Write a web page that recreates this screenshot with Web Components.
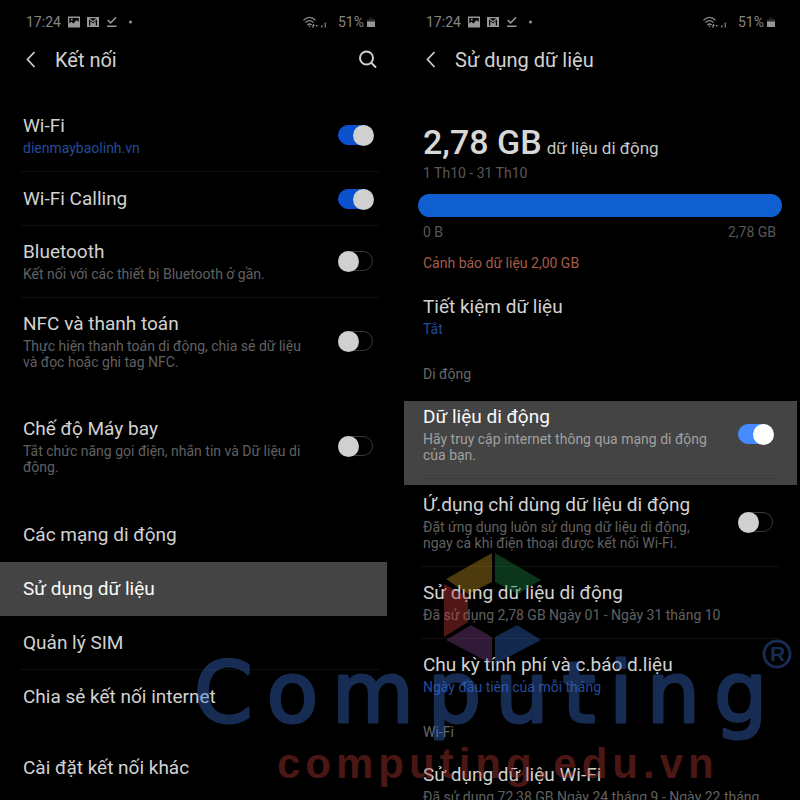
<!DOCTYPE html>
<html lang="vi">
<head>
<meta charset="utf-8">
<meta name="viewport" content="width=device-width, initial-scale=1">
<title>Kết nối</title>
<style>
html { background: #000; }
body { margin: 0; height: 100vh; overflow: hidden; background: #000; color: #d2d2d2; font-family: Roboto, "Noto Sans", sans-serif; }
</style>
</head>
<body>
<settings-stage>
  <phone-screen>
    <status-bar></status-bar>
    <screen-header heading="Kết nối" search></screen-header>
    <settings-group>
      <settings-row heading="Wi-Fi" note="dienmaybaolinh.vn" accent toggle="on" divider></settings-row>
      <settings-row heading="Wi-Fi Calling" toggle="on" divider></settings-row>
      <settings-row heading="Bluetooth" note="Kết nối với các thiết bị Bluetooth ở gần." toggle="off" divider></settings-row>
      <settings-row heading="NFC và thanh toán" note="Thực hiện thanh toán di động, chia sẻ dữ liệu và đọc hoặc ghi tag NFC." toggle="off"></settings-row>
    </settings-group>
    <settings-group>
      <settings-row heading="Chế độ Máy bay" note="Tắt chức năng gọi điện, nhắn tin và Dữ liệu di động." toggle="off"></settings-row>
    </settings-group>
    <settings-group>
      <settings-row heading="Các mạng di động"></settings-row>
      <settings-row heading="Sử dụng dữ liệu" marked="start"></settings-row>
      <settings-row heading="Quản lý SIM" divider></settings-row>
      <settings-row heading="Chia sẻ kết nối internet"></settings-row>
    </settings-group>
    <settings-group>
      <settings-row heading="Cài đặt kết nối khác"></settings-row>
    </settings-group>
  </phone-screen>
  <phone-screen>
    <status-bar></status-bar>
    <screen-header heading="Sử dụng dữ liệu"></screen-header>
    <data-usage amount="2,78 GB" period="1 Th10 - 31 Th10" from="0 B" to="2,78 GB">
      <span slot="kind">dữ liệu di động</span>
      <span slot="warning">Cảnh báo dữ liệu 2,00 GB</span>
    </data-usage>
    <settings-row heading="Tiết kiệm dữ liệu" note="Tắt" accent></settings-row>
    <section-label>Di động</section-label>
    <settings-row heading="Dữ liệu di động" note="Hãy truy cập internet thông qua mạng di động của bạn." toggle="on" marked="full" divider></settings-row>
    <settings-row heading="Ứ.dụng chỉ dùng dữ liệu di động" note="Đặt ứng dụng luôn sử dụng dữ liệu di động, ngay cả khi điện thoại được kết nối Wi-Fi." toggle="off" divider></settings-row>
    <settings-row heading="Sử dụng dữ liệu di động" note="Đã sử dụng 2,78 GB Ngày 01 - Ngày 31 tháng 10" divider></settings-row>
    <settings-row heading="Chu kỳ tính phí và c.báo d.liệu" note="Ngày đầu tiên của mỗi tháng" accent></settings-row>
    <section-label>Wi-Fi</section-label>
    <settings-row heading="Sử dụng dữ liệu Wi-Fi" note="Đã sử dụng 72,38 GB Ngày 24 tháng 9 - Ngày 22 tháng"></settings-row>
  </phone-screen>
  <brand-watermark slot="overlay"></brand-watermark>
</settings-stage>

<script>
const define = (name, render) => customElements.define(name, class extends HTMLElement {
  connectedCallback() {
    if (this.shadowRoot) return;
    this.attachShadow({ mode: 'open' }).innerHTML = render(this);
  }
});
const attr = (el, name) => el.getAttribute(name) || '';

define('settings-stage', () => `
<style>
:host { display: block; position: relative; height: 100%; overflow: hidden; }
.columns { display: grid; grid-template-columns: 1fr 1fr; }
</style>
<div class="columns"><slot></slot></div>
<slot name="overlay"></slot>`);

define('phone-screen', () => `
<style>
:host { display: block; min-width: 0; }
</style>
<slot></slot>`);

define('settings-group', () => `
<style>
:host { display: block; margin-bottom: 17px; }
</style>
<slot></slot>`);

define('status-bar', () => `
<style>
:host { display: flex; justify-content: space-between; align-items: center; height: 20px; padding: 12px 25px 8px 26px; color: #858585; font-size: 14px; line-height: 20px; }
div { display: flex; align-items: center; }
.left { gap: 7px; }
.right { gap: 3px; }
.level { margin-left: 8px; }
svg { display: block; fill: #989898; }
</style>
<div class="left">
  <span>17:24</span>
  <svg width="12" height="12" viewBox="0 0 12 12"><path fill-rule="evenodd" d="M0 .5h12v11H0zM1.300 2v5.600l2.200-1.800 2 1.600 3-3.400 2.200 2V2zM3 2.800h1.600v1.600H3z"/></svg>
  <svg width="12" height="12" viewBox="0 0 12 12"><path fill-rule="evenodd" d="M0 1h12v10H0zM2.600 2.200 6 5l3.400-2.800zM2 3.600v5.900h1.200V5.200L6 7.400l2.800-2.200v4.300H10V3.600L6 6.400z"/></svg>
  <svg width="12" height="12" viewBox="0 0 12 12"><path d="M1 9.600h9.500V11H1zM1.200 4.600l1-1 2.400 2.200L9.600.7l1 1-6 6.300z"/></svg>
  <svg width="12" height="12" viewBox="0 0 12 12"><circle cx="5.500" cy="6" r="1.500"/></svg>
</div>
<div class="right">
  <svg width="15" height="13" viewBox="0 0 15 13"><path d="M.5 4.200Q6.500-1.400 12.500 4.200M2.400 6.600Q6.500 2.800 10.600 6.600M4.300 9Q6.500 7 8.700 9" fill="none" stroke="#8a8a8a" stroke-width="1.200"/><path d="M5.200 9.700h2.600L6.500 11.300zM10.500 7.800 12 10H9zM10 12.300 8.800 10.500h2.400zM13 9h1.500v1.500H13z"/></svg>
  <svg width="6" height="12" viewBox="0 0 6 12"><path d="M0 9h1.500v2.500H0zM3.500 6.500H5v5H3.500z" opacity=".7"/></svg>
  <span class="level">51%</span>
  <svg width="8" height="12" viewBox="0 0 8 12"><path d="M2.500 1.500h3v1h-3z" opacity=".3"/><path d="M0 3h8v3H0z" opacity=".25"/><path d="M0 5.500h8V11H0z"/></svg>
</div>`);

define('screen-header', el => `
<style>
:host { display: flex; align-items: center; height: 40px; padding: 0 22px 20px 24px; }
button { display: block; padding: 0; border: 0; background: none; color: #cfcfcf; }
svg { display: block; fill: none; stroke: currentColor; stroke-width: 2; }
h1 { flex: 1; margin: 0 0 0 17px; font-size: 20px; line-height: 24px; font-weight: 400; }
</style>
<button aria-label="Quay lại"><svg width="14" height="18" viewBox="0 0 14 18"><path d="M10.500 1 3.500 8.500l7 7.500" stroke-width="1.700"/></svg></button>
<h1>${attr(el, 'heading')}</h1>
${el.hasAttribute('search') ? '<button aria-label="Tìm kiếm"><svg width="20" height="20" viewBox="0 0 20 20"><circle cx="8.500" cy="8" r="6.500"/><path d="m13 12.500 5 5"/></svg></button>' : ''}`);

define('toggle-switch', el => `
<style>
:host { display: block; flex: none; }
input { appearance: none; display: flex; align-items: center; box-sizing: border-box; width: 35px; height: 20px; margin: 0; border: 1px solid #3a3a3a; border-radius: 10px; background: transparent; }
input::before { content: ""; width: 21px; height: 21px; margin: 0 -2px 0 -1px; border-radius: 50%; background: var(--knob, #d0d0d0); flex: none; }
input:checked { justify-content: flex-end; border-color: var(--track, #0b50cc); background: var(--track, #0b50cc); }
</style>
<input type="checkbox" role="switch" aria-label="${attr(el, 'name')}" ${el.hasAttribute('on') ? 'checked' : ''}>`);

define('settings-row', el => {
  const toggle = attr(el, 'toggle');
  const text = `<span class="title">${attr(el, 'heading')}</span>${el.hasAttribute('note') ? `<span class="note">${attr(el, 'note')}</span>` : ''}`;
  return `
<style>
:host { display: flex; align-items: center; gap: 24px; position: relative; isolation: isolate; padding: 14px 27px 16px 23px; }
:host(:not([note])) { padding-top: 15px; padding-bottom: 15px; }
:host([divider])::after { content: ""; position: absolute; left: 20px; right: 20px; bottom: 0; height: 1px; background: #0e0e0e; }
:host([marked])::before { content: ""; position: absolute; z-index: -1; background: #444; }
:host([marked="start"])::before { inset: 0 13px 0 0; }
:host([marked="full"])::before { inset: 10px 3px -6px 4px; }
:host([marked="full"])::after { background: #3c3c3c; }
:host([marked]) { color: #fafafa; --note: #a0a0a0; --track: #448bff; --knob: #fff; z-index: 1; }
.text { display: block; flex: 1; min-width: 0; padding: 0; border: 0; background: none; color: inherit; font: inherit; text-align: left; }
.title { display: block; font-size: 19px; line-height: 24px; }
.note { display: block; margin-top: 2px; font-size: 14px; line-height: 16px; color: var(--note, #606060); }
:host([accent]) .note { color: #234c9c; }
</style>
<button class="text">${text}</button>
${toggle ? `<toggle-switch name="${attr(el, 'heading')}" ${toggle === 'on' ? 'on' : ''}></toggle-switch>` : ''}`;
});

define('section-label', () => `
<style>
:host { display: block; padding: 11px 23px 7px; color: #686868; font-size: 14px; line-height: 20px; }
</style>
<slot></slot>`);

define('data-usage', el => `
<style>
:host { display: block; padding: 25px 18px 10px; color: #585858; font-size: 14px; line-height: 16px; }
p, .scale { margin: 0; padding: 0 6px 0 5px; }
.total { display: flex; align-items: baseline; gap: 5px; line-height: 34px; color: #c8c8c8; font-size: 17px; }
strong { font-size: 34px; font-weight: 500; color: #d8d8d8; }
.bar { height: 23px; margin: 13px 0 7px; border-radius: 12px; background: #0f5fd0; }
.scale { display: flex; justify-content: space-between; }
.warning { margin-top: 15px; color: #a45b49; }
</style>
<p class="total"><strong>${attr(el, 'amount')}</strong><slot name="kind"></slot></p>
<p class="period">${attr(el, 'period')}</p>
<div class="bar" role="img" aria-label="${attr(el, 'amount')}"></div>
<div class="scale"><span>${attr(el, 'from')}</span><span>${attr(el, 'to')}</span></div>
<p class="warning"><slot name="warning"></slot></p>`);

define('brand-watermark', () => `
<style>
:host { display: block; position: absolute; z-index: 5; left: 190px; top: 545px; pointer-events: none; opacity: .4; }
svg { display: block; overflow: visible; }
.name { font: 84px "DejaVu Sans", sans-serif; letter-spacing: 14px; fill: #3a6fd0; stroke: #3a6fd0; stroke-width: 3; stroke-linejoin: round; }
.mark { font: 700 21px "Liberation Sans", sans-serif; fill: #3a6fd0; }
.site { font: 700 42px "Liberation Sans", sans-serif; letter-spacing: 5px; fill: #b83a36; }
</style>
<svg width="600" height="255">
  <path fill="#c09422" d="M256 34 302 8V37L278 49z"/>
  <path fill="#1d8844" d="M305 8 351 35 328 49 305 37z"/>
  <path fill="#c83a38" d="M254 39 278 52V77L254 92z"/>
  <path fill="#794389" d="M256 95 281 80 302 92V119z"/>
  <path fill="#2f65c0" d="M305 92 327 80 351 95 305 119z"/>
  <text class="name" x="4" y="177">Computing</text>
  <circle cx="587" cy="109" r="13" fill="none" stroke="#3a6fd0" stroke-width="3"/>
  <text class="mark" x="580" y="116">R</text>
  <text class="site" x="87" y="233">computing.edu.vn</text>
</svg>`);
</script>
</body>
</html>
